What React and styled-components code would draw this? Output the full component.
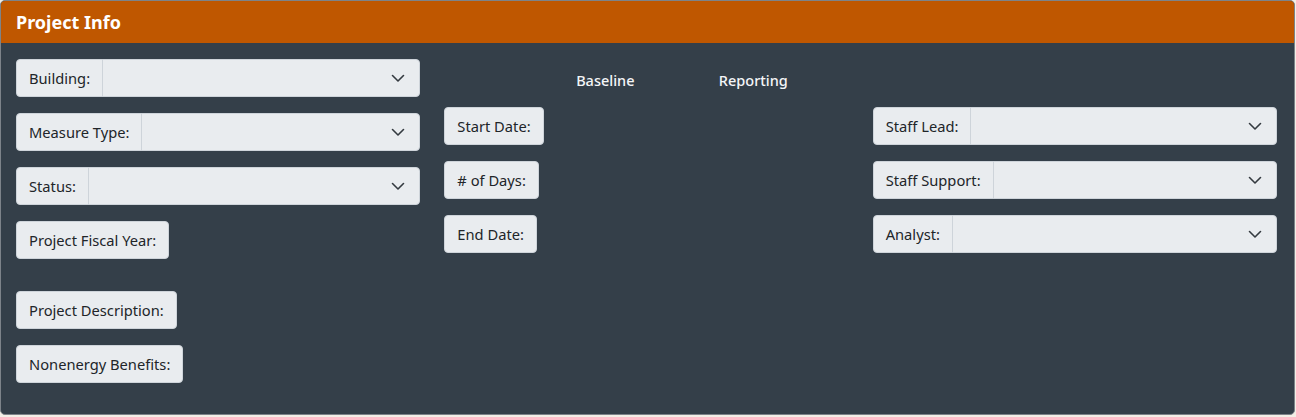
import React from 'react'
import styled, { createGlobalStyle } from 'styled-components'

const GlobalStyle = createGlobalStyle`
  html, body {
    margin: 0;
    padding: 0;
    background: #f3eee6;
    font-family: 'Noto Sans', 'Open Sans', sans-serif;
  }
`

const Card = styled.div`
  width: 1295px;
  height: 415px;
  box-sizing: border-box;
  border: 1px solid #7d8389;
  border-radius: 5px;
  background: #343f49;
  overflow: hidden;
`

const Header = styled.div`
  height: 42px;
  box-sizing: border-box;
  background: #bf5700;
  color: #fff;
  font-weight: 700;
  font-size: 18px;
  line-height: 42px;
  padding: 0 15px;
`

const Body = styled.div`
  display: grid;
  grid-template-columns: repeat(3, 1fr);
  column-gap: 24px;
  padding: 16px 17px 0 15px;
`

const Column = styled.div`
  display: flex;
  flex-direction: column;
  gap: 16px;
  align-items: flex-start;
`

const Spacer = styled.div`
  height: ${p => p.$h}px;
`

const HeadRow = styled.div`
  display: grid;
  grid-template-columns: 87px 148px 148px;
  height: 32px;
  box-sizing: border-box;
  padding-top: 9px;
  line-height: 24px;
  color: #f4f6f8;
  font-size: 14.5px;
  font-weight: 500;
`

const HeadCell = styled.div`
  grid-column: ${p => p.$col};
  text-align: center;
`

const Group = styled.div`
  display: flex;
  height: 38px;
  width: ${p => (p.$full ? '100%' : 'auto')};
  box-sizing: border-box;
`

const Label = styled.span`
  display: flex;
  align-items: center;
  box-sizing: border-box;
  height: 38px;
  padding: 0 12px;
  background: #e9ecef;
  border: 1px solid #ced4da;
  border-radius: ${p => (p.$alone ? '4px' : '4px 0 0 4px')};
  color: #212529;
  font-size: 14.7px;
  white-space: nowrap;
`

const Select = styled.div`
  flex: 1;
  display: flex;
  align-items: center;
  justify-content: flex-end;
  box-sizing: border-box;
  height: 38px;
  padding-right: 13px;
  margin-left: -1px;
  background: #e9ecef;
  border: 1px solid #ced4da;
  border-radius: 0 4px 4px 0;
`

const Chevron = () => (
  <svg width="16" height="16" viewBox="0 0 16 16" fill="none">
    <path d="M2.5 5.5l5.5 5.5 5.5-5.5" stroke="#343a40" strokeWidth="1.6" strokeLinecap="round" strokeLinejoin="round" />
  </svg>
)

const SelectGroup = ({ label }) => (
  <Group $full>
    <Label>{label}</Label>
    <Select>
      <Chevron />
    </Select>
  </Group>
)

const TextGroup = ({ label }) => (
  <Group>
    <Label $alone>{label}</Label>
  </Group>
)

const App = () => (
  <>
    <GlobalStyle />
    <Card>
      <Header>Project Info</Header>
      <Body>
        <Column>
          <SelectGroup label="Building:" />
          <SelectGroup label="Measure Type:" />
          <SelectGroup label="Status:" />
          <TextGroup label="Project Fiscal Year:" />
          <Spacer $h={0} />
          <TextGroup label="Project Description:" />
          <TextGroup label="Nonenergy Benefits:" />
        </Column>
        <Column>
          <HeadRow>
            <HeadCell $col={2}>Baseline</HeadCell>
            <HeadCell $col={3}>Reporting</HeadCell>
          </HeadRow>
          <TextGroup label="Start Date:" />
          <TextGroup label="# of Days:" />
          <TextGroup label="End Date:" />
        </Column>
        <Column>
          <Spacer $h={32} />
          <SelectGroup label="Staff Lead:" />
          <SelectGroup label="Staff Support:" />
          <SelectGroup label="Analyst:" />
        </Column>
      </Body>
    </Card>
  </>
)

export default App
